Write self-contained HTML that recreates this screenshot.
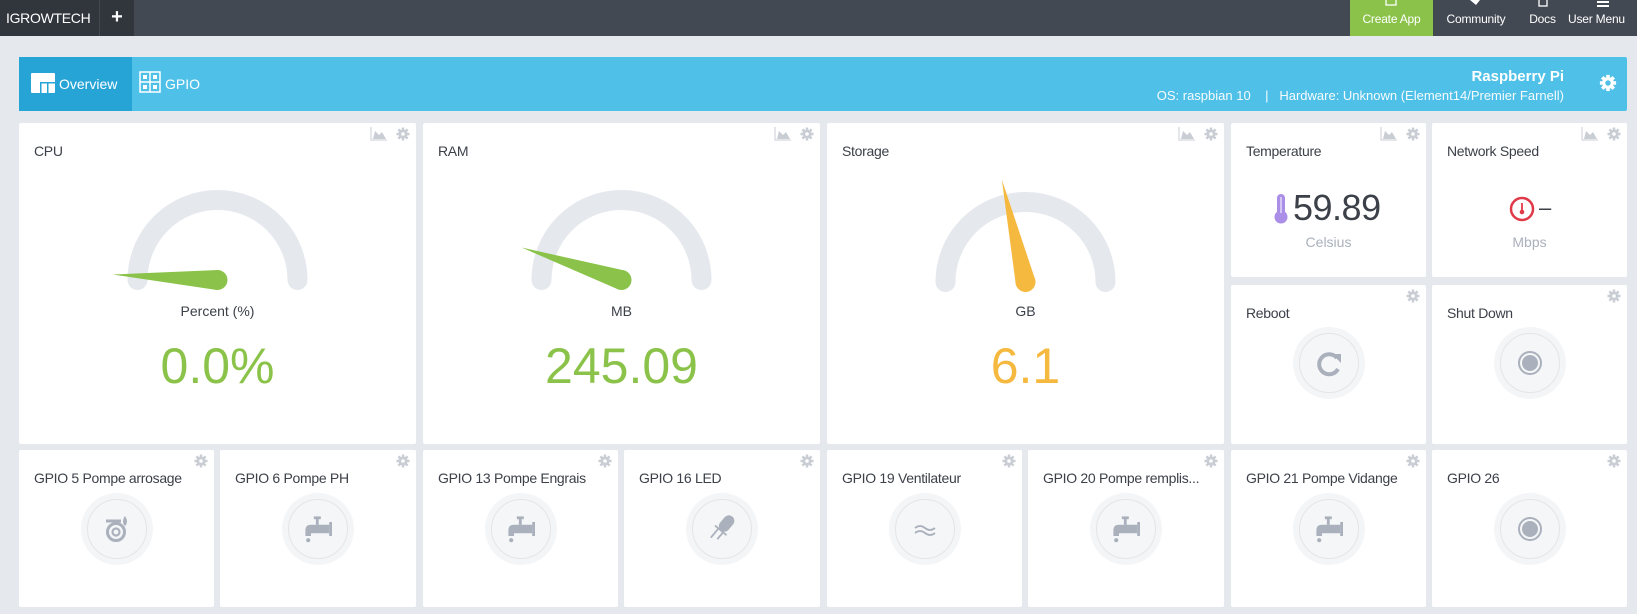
<!DOCTYPE html>
<html><head><meta charset="utf-8"><style>
*{margin:0;padding:0;box-sizing:border-box}
body{width:1637px;height:614px;overflow:hidden;background:#e5e8ed;font-family:"Liberation Sans",sans-serif;position:relative;color:#3c4049}
.top{position:absolute;left:0;top:0;width:1637px;height:36px;background:#434953}
.brand{position:absolute;left:0;top:0;width:99px;height:36px;background:#31353c;color:#fff;font-size:14px;line-height:36px;padding-left:6px;letter-spacing:-0.3px}
.plus{position:absolute;left:100px;top:0;width:34px;height:36px;background:#31353c;color:#fff;font-size:20px;font-weight:bold;text-align:center;line-height:34px}
.nav{position:absolute;top:0;height:36px;color:#fff;font-size:12px;text-align:center;padding-top:12px;letter-spacing:-0.2px}
.bar{position:absolute;left:19px;top:57px;width:1608px;height:54px;background:#4fc0e8;border-radius:2px}
.tab1{position:absolute;left:0;top:0;width:113px;height:54px;background:#27a4d6;color:#fff;font-size:14px;line-height:54px;padding-left:40px}
.tab2{position:absolute;left:146px;top:0;color:#fff;font-size:14px;line-height:54px}
.card{position:absolute;background:#fff;border-radius:2px}
.t{position:absolute;left:15px;top:20px;font-size:14px;color:#3c4049;letter-spacing:-0.3px}
.ico{position:absolute;top:4px;right:6px;width:40px;height:14px}
.big{position:absolute;width:100%;text-align:center}
.circ{position:absolute;width:72px;height:72px;border-radius:50%;background:#f4f5f7;left:50%;margin-left:-36px}
.circ .in{position:absolute;left:6px;top:6px;width:60px;height:60px;border-radius:50%;border:1px solid #e3e5e8;background:#f5f6f8}
.circ svg{position:absolute;left:0;top:0}
</style></head><body>
<div class="top">
 <div class="brand">IGROWTECH</div>
 <div class="plus">+</div>
 <div class="nav" style="left:1350px;width:83px;background:#8bc34a">Create App</div>
 <div class="nav" style="left:1433px;width:86px">Community</div>
 <div class="nav" style="left:1519px;width:47px">Docs</div>
 <div class="nav" style="left:1566px;width:80px;text-align:left;padding-left:2px">User Menu</div>
 <svg style="position:absolute;left:1384px;top:0" width="14" height="8"><rect x="2" y="-3" width="10" height="8" fill="none" stroke="#fff" stroke-width="1.3"/></svg>
 <svg style="position:absolute;left:1468px;top:0" width="14" height="8"><path d="M2 0 L12 0 L8 5 Z" fill="#fff"/></svg>
 <svg style="position:absolute;left:1536px;top:0" width="14" height="8"><rect x="3" y="-3" width="8" height="9" fill="none" stroke="#fff" stroke-width="1.3"/></svg>
 <svg style="position:absolute;left:1596px;top:0" width="14" height="8"><rect x="1" y="1" width="12" height="2" fill="#fff"/><rect x="1" y="5" width="12" height="2" fill="#fff"/></svg>
</div>
<div class="bar">
 <div class="tab1"><svg style="position:absolute;left:12px;top:16px" width="24" height="20"><rect x="0" y="0" width="24" height="20" fill="#fff" rx="1"/><rect x="9" y="9" width="1.5" height="11" fill="#27a4d6"/><rect x="9" y="9" width="15" height="1.5" fill="#27a4d6"/><rect x="16" y="10" width="1.5" height="10" fill="#27a4d6"/></svg>Overview</div>
 <svg style="position:absolute;left:120px;top:14px" width="22" height="22"><g fill="none" stroke="#fff" stroke-width="1.5"><rect x="1" y="1" width="20" height="20"/><line x1="11" y1="1" x2="11" y2="21"/><line x1="1" y1="11" x2="21" y2="11"/></g><g fill="#fff"><rect x="4" y="4" width="4" height="4"/><rect x="14" y="4" width="4" height="4"/><rect x="4" y="14" width="4" height="4"/><rect x="14" y="14" width="4" height="4"/></g></svg>
 <div class="tab2">GPIO</div>
 <div style="position:absolute;right:63px;top:11px;color:#fff;font-weight:bold;font-size:15px">Raspberry Pi</div>
 <div style="position:absolute;right:63px;top:31px;color:#fff;font-size:13px;opacity:.95">OS: raspbian 10 &nbsp;&nbsp; | &nbsp;&nbsp;Hardware: Unknown (Element14/Premier Farnell)</div>
 <svg style="position:absolute;left:1580px;top:17px" width="18" height="18" viewBox="0 0 20 20"><g fill="#fff"><circle cx="10" cy="10" r="6.5"/><g stroke="#fff" stroke-width="4"><line x1="10" y1="1" x2="10" y2="19"/><line x1="1" y1="10" x2="19" y2="10"/><line x1="3.6" y1="3.6" x2="16.4" y2="16.4"/><line x1="16.4" y1="3.6" x2="3.6" y2="16.4"/></g></g><circle cx="10" cy="10" r="3" fill="#4fc0e8"/></svg>
</div>

<!-- Row 1 -->
<div class="card" style="left:19px;top:123px;width:397px;height:321px">
 <div class="t">CPU</div>
 <svg class="ico" viewBox="0 0 40 14"><path d="M1 0V13H17" stroke="#c9cdd4" fill="none"/><path d="M3 12 L5 4 L9 8 L12 5 L16 12Z" fill="#c9cdd4"/><g transform="translate(33,7)"><circle r="4.5" fill="#c9cdd4"/><g stroke="#c9cdd4" stroke-width="2.5"><line y1="-6.5" y2="6.5"/><line x1="-6.5" x2="6.5"/><line x1="-4.6" y1="-4.6" x2="4.6" y2="4.6"/><line x1="4.6" y1="-4.6" x2="-4.6" y2="4.6"/></g><circle r="1.8" fill="#fff"/></g></svg>
 <svg style="position:absolute;left:0;top:0" width="397" height="200"><path d="M118.5 157 A80 80 0 0 1 278.5 157" stroke="#e5e8ed" stroke-width="20" fill="none" stroke-linecap="round"/><g transform="translate(198.5,157) rotate(183)"><path d="M0 -10 L105 0 L0 10Z" fill="#8bc34a"/><circle r="10" fill="#8bc34a"/></g></svg>
 <div class="big" style="top:180px;font-size:14px">Percent (%)</div>
 <div class="big" style="top:214px;font-size:50px;color:#8bc34a">0.0%</div>
</div>
<div class="card" style="left:423px;top:123px;width:397px;height:321px">
 <div class="t">RAM</div>
 <svg class="ico" viewBox="0 0 40 14"><path d="M1 0V13H17" stroke="#c9cdd4" fill="none"/><path d="M3 12 L5 4 L9 8 L12 5 L16 12Z" fill="#c9cdd4"/><g transform="translate(33,7)"><circle r="4.5" fill="#c9cdd4"/><g stroke="#c9cdd4" stroke-width="2.5"><line y1="-6.5" y2="6.5"/><line x1="-6.5" x2="6.5"/><line x1="-4.6" y1="-4.6" x2="4.6" y2="4.6"/><line x1="4.6" y1="-4.6" x2="-4.6" y2="4.6"/></g><circle r="1.8" fill="#fff"/></g></svg>
 <svg style="position:absolute;left:0;top:0" width="397" height="200"><path d="M118.5 157 A80 80 0 0 1 278.5 157" stroke="#e5e8ed" stroke-width="20" fill="none" stroke-linecap="round"/><g transform="translate(198.5,157) rotate(198)"><path d="M0 -10 L105 0 L0 10Z" fill="#8bc34a"/><circle r="10" fill="#8bc34a"/></g></svg>
 <div class="big" style="top:180px;font-size:14px">MB</div>
 <div class="big" style="top:214px;font-size:50px;color:#8bc34a">245.09</div>
</div>
<div class="card" style="left:827px;top:123px;width:397px;height:321px">
 <div class="t">Storage</div>
 <svg class="ico" viewBox="0 0 40 14"><path d="M1 0V13H17" stroke="#c9cdd4" fill="none"/><path d="M3 12 L5 4 L9 8 L12 5 L16 12Z" fill="#c9cdd4"/><g transform="translate(33,7)"><circle r="4.5" fill="#c9cdd4"/><g stroke="#c9cdd4" stroke-width="2.5"><line y1="-6.5" y2="6.5"/><line x1="-6.5" x2="6.5"/><line x1="-4.6" y1="-4.6" x2="4.6" y2="4.6"/><line x1="4.6" y1="-4.6" x2="-4.6" y2="4.6"/></g><circle r="1.8" fill="#fff"/></g></svg>
 <svg style="position:absolute;left:0;top:0" width="397" height="200"><path d="M118.5 159 A80 80 0 0 1 278.5 159" stroke="#e5e8ed" stroke-width="20" fill="none" stroke-linecap="round"/><g transform="translate(198.5,159) rotate(257)"><path d="M0 -10 L105 0 L0 10Z" fill="#f6b940"/><circle r="10" fill="#f6b940"/></g></svg>
 <div class="big" style="top:180px;font-size:14px">GB</div>
 <div class="big" style="top:214px;font-size:50px;color:#f6b940">6.1</div>
</div>
<div class="card" style="left:1231px;top:123px;width:195px;height:154px">
 <div class="t">Temperature</div>
 <svg class="ico" viewBox="0 0 40 14"><path d="M1 0V13H17" stroke="#c9cdd4" fill="none"/><path d="M3 12 L5 4 L9 8 L12 5 L16 12Z" fill="#c9cdd4"/><g transform="translate(33,7)"><circle r="4.5" fill="#c9cdd4"/><g stroke="#c9cdd4" stroke-width="2.5"><line y1="-6.5" y2="6.5"/><line x1="-6.5" x2="6.5"/><line x1="-4.6" y1="-4.6" x2="4.6" y2="4.6"/><line x1="4.6" y1="-4.6" x2="-4.6" y2="4.6"/></g><circle r="1.8" fill="#fff"/></g></svg>
 <svg style="position:absolute;left:42px;top:70px" width="16" height="32"><rect x="4" y="1" width="8" height="22" rx="4" fill="#ab8ee8"/><circle cx="8" cy="24" r="6.5" fill="#ab8ee8"/><rect x="7" y="4" width="2" height="16" fill="#fff" opacity=".5"/></svg>
 <div style="position:absolute;left:62px;top:64px;font-size:36px;color:#3c4049;letter-spacing:-0.5px">59.89</div>
 <div class="big" style="top:111px;font-size:14px;color:#aab1bc">Celsius</div>
</div>
<div class="card" style="left:1432px;top:123px;width:195px;height:154px">
 <div class="t">Network Speed</div>
 <svg class="ico" viewBox="0 0 40 14"><path d="M1 0V13H17" stroke="#c9cdd4" fill="none"/><path d="M3 12 L5 4 L9 8 L12 5 L16 12Z" fill="#c9cdd4"/><g transform="translate(33,7)"><circle r="4.5" fill="#c9cdd4"/><g stroke="#c9cdd4" stroke-width="2.5"><line y1="-6.5" y2="6.5"/><line x1="-6.5" x2="6.5"/><line x1="-4.6" y1="-4.6" x2="4.6" y2="4.6"/><line x1="4.6" y1="-4.6" x2="-4.6" y2="4.6"/></g><circle r="1.8" fill="#fff"/></g></svg>
 <svg style="position:absolute;left:76px;top:72px" width="28" height="28"><circle cx="14" cy="14" r="11" fill="none" stroke="#e03a48" stroke-width="2.5"/><line x1="14" y1="8" x2="14" y2="16" stroke="#e03a48" stroke-width="1.8"/><circle cx="14" cy="17" r="2.3" fill="#e03a48"/></svg>
 <div style="position:absolute;left:107px;top:72px;font-size:22px;color:#3c4049">–</div>
 <div class="big" style="top:111px;font-size:14px;color:#aab1bc">Mbps</div>
</div>
<div class="card" style="left:1231px;top:285px;width:195px;height:159px">
 <div class="t">Reboot</div>
 <svg class="ico" viewBox="0 0 40 14"><g transform="translate(33,7)"><circle r="4.5" fill="#c9cdd4"/><g stroke="#c9cdd4" stroke-width="2.5"><line y1="-6.5" y2="6.5"/><line x1="-6.5" x2="6.5"/><line x1="-4.6" y1="-4.6" x2="4.6" y2="4.6"/><line x1="4.6" y1="-4.6" x2="-4.6" y2="4.6"/></g><circle r="1.8" fill="#fff"/></g></svg>
 <div class="circ" style="top:42px"><div class="in"></div><svg width="72" height="72"><path d="M44 31 A10 10 0 1 0 45 42" stroke="#aab1bc" stroke-width="4" fill="none"/><path d="M39 27 L48 27 L48 36Z" fill="#aab1bc"/></svg></div>
</div>
<div class="card" style="left:1432px;top:285px;width:195px;height:159px">
 <div class="t">Shut Down</div>
 <svg class="ico" viewBox="0 0 40 14"><g transform="translate(33,7)"><circle r="4.5" fill="#c9cdd4"/><g stroke="#c9cdd4" stroke-width="2.5"><line y1="-6.5" y2="6.5"/><line x1="-6.5" x2="6.5"/><line x1="-4.6" y1="-4.6" x2="4.6" y2="4.6"/><line x1="4.6" y1="-4.6" x2="-4.6" y2="4.6"/></g><circle r="1.8" fill="#fff"/></g></svg>
 <div class="circ" style="top:42px"><div class="in"></div><svg width="72" height="72"><circle cx="36" cy="36" r="11" fill="none" stroke="#aab1bc" stroke-width="2"/><circle cx="36" cy="36" r="8" fill="#aab1bc"/></svg></div>
</div>

<!-- Row 2 -->
<div class="card" style="left:19px;top:450px;width:195px;height:157px"><div class="t">GPIO 5 Pompe arrosage</div><svg class="ico" viewBox="0 0 40 14"><g transform="translate(33,7)"><circle r="4.5" fill="#c9cdd4"/><g stroke="#c9cdd4" stroke-width="2.5"><line y1="-6.5" y2="6.5"/><line x1="-6.5" x2="6.5"/><line x1="-4.6" y1="-4.6" x2="4.6" y2="4.6"/><line x1="4.6" y1="-4.6" x2="-4.6" y2="4.6"/></g><circle r="1.8" fill="#fff"/></g></svg>
 <div class="circ" style="top:43px"><div class="in"></div><svg width="72" height="72"><circle cx="35" cy="39" r="8.5" fill="none" stroke="#aab1bc" stroke-width="3"/><circle cx="35" cy="39" r="3.5" fill="none" stroke="#aab1bc" stroke-width="2.2"/><line x1="25" y1="28" x2="40" y2="28" stroke="#aab1bc" stroke-width="3"/><path d="M44 23 Q48 29 44 33 Q40 29 44 23Z" fill="#aab1bc"/></svg></div></div>
<div class="card" style="left:220px;top:450px;width:196px;height:157px"><div class="t">GPIO 6 Pompe PH</div><svg class="ico" viewBox="0 0 40 14"><g transform="translate(33,7)"><circle r="4.5" fill="#c9cdd4"/><g stroke="#c9cdd4" stroke-width="2.5"><line y1="-6.5" y2="6.5"/><line x1="-6.5" x2="6.5"/><line x1="-4.6" y1="-4.6" x2="4.6" y2="4.6"/><line x1="4.6" y1="-4.6" x2="-4.6" y2="4.6"/></g><circle r="1.8" fill="#fff"/></g></svg>
 <div class="circ" style="top:43px"><div class="in"></div><svg width="72" height="72"><g transform="translate(36,36) scale(1.4) translate(-37,-33)"><rect x="34" y="24" width="5" height="2" fill="#aab1bc"/><rect x="35.5" y="25" width="2" height="5" fill="#aab1bc"/><path d="M28 38 L28 34 Q28 30 32 30 L45 30 L45 36 L32 36 L32 38Z" fill="#aab1bc"/><rect x="45" y="28" width="2" height="10" fill="#aab1bc"/><circle cx="30" cy="41" r="1.5" fill="#aab1bc"/></g></svg></div></div>
<div class="card" style="left:423px;top:450px;width:195px;height:157px"><div class="t">GPIO 13 Pompe Engrais</div><svg class="ico" viewBox="0 0 40 14"><g transform="translate(33,7)"><circle r="4.5" fill="#c9cdd4"/><g stroke="#c9cdd4" stroke-width="2.5"><line y1="-6.5" y2="6.5"/><line x1="-6.5" x2="6.5"/><line x1="-4.6" y1="-4.6" x2="4.6" y2="4.6"/><line x1="4.6" y1="-4.6" x2="-4.6" y2="4.6"/></g><circle r="1.8" fill="#fff"/></g></svg>
 <div class="circ" style="top:43px"><div class="in"></div><svg width="72" height="72"><g transform="translate(36,36) scale(1.4) translate(-37,-33)"><rect x="34" y="24" width="5" height="2" fill="#aab1bc"/><rect x="35.5" y="25" width="2" height="5" fill="#aab1bc"/><path d="M28 38 L28 34 Q28 30 32 30 L45 30 L45 36 L32 36 L32 38Z" fill="#aab1bc"/><rect x="45" y="28" width="2" height="10" fill="#aab1bc"/><circle cx="30" cy="41" r="1.5" fill="#aab1bc"/></g></svg></div></div>
<div class="card" style="left:624px;top:450px;width:196px;height:157px"><div class="t">GPIO 16 LED</div><svg class="ico" viewBox="0 0 40 14"><g transform="translate(33,7)"><circle r="4.5" fill="#c9cdd4"/><g stroke="#c9cdd4" stroke-width="2.5"><line y1="-6.5" y2="6.5"/><line x1="-6.5" x2="6.5"/><line x1="-4.6" y1="-4.6" x2="4.6" y2="4.6"/><line x1="4.6" y1="-4.6" x2="-4.6" y2="4.6"/></g><circle r="1.8" fill="#fff"/></g></svg>
 <div class="circ" style="top:43px"><div class="in"></div><svg width="72" height="72"><g transform="rotate(40 37 34)"><rect x="32" y="20" width="11" height="18" rx="5.5" fill="#aab1bc"/><line x1="34.5" y1="38" x2="34.5" y2="50" stroke="#aab1bc" stroke-width="1.8"/><line x1="40.5" y1="38" x2="40.5" y2="47" stroke="#aab1bc" stroke-width="1.8"/><line x1="30" y1="38" x2="45" y2="38" stroke="#aab1bc" stroke-width="1.8"/></g></svg></div></div>
<div class="card" style="left:827px;top:450px;width:195px;height:157px"><div class="t">GPIO 19 Ventilateur</div><svg class="ico" viewBox="0 0 40 14"><g transform="translate(33,7)"><circle r="4.5" fill="#c9cdd4"/><g stroke="#c9cdd4" stroke-width="2.5"><line y1="-6.5" y2="6.5"/><line x1="-6.5" x2="6.5"/><line x1="-4.6" y1="-4.6" x2="4.6" y2="4.6"/><line x1="4.6" y1="-4.6" x2="-4.6" y2="4.6"/></g><circle r="1.8" fill="#fff"/></g></svg>
 <div class="circ" style="top:43px"><div class="in"></div><svg width="72" height="72"><g fill="none" stroke="#aab1bc" stroke-width="1.8"><path d="M26 35 Q31 31 36 35 T46 35"/><path d="M26 40 Q31 36 36 40 T46 40"/></g></svg></div></div>
<div class="card" style="left:1028px;top:450px;width:196px;height:157px"><div class="t">GPIO 20 Pompe remplis...</div><svg class="ico" viewBox="0 0 40 14"><g transform="translate(33,7)"><circle r="4.5" fill="#c9cdd4"/><g stroke="#c9cdd4" stroke-width="2.5"><line y1="-6.5" y2="6.5"/><line x1="-6.5" x2="6.5"/><line x1="-4.6" y1="-4.6" x2="4.6" y2="4.6"/><line x1="4.6" y1="-4.6" x2="-4.6" y2="4.6"/></g><circle r="1.8" fill="#fff"/></g></svg>
 <div class="circ" style="top:43px"><div class="in"></div><svg width="72" height="72"><g transform="translate(36,36) scale(1.4) translate(-37,-33)"><rect x="34" y="24" width="5" height="2" fill="#aab1bc"/><rect x="35.5" y="25" width="2" height="5" fill="#aab1bc"/><path d="M28 38 L28 34 Q28 30 32 30 L45 30 L45 36 L32 36 L32 38Z" fill="#aab1bc"/><rect x="45" y="28" width="2" height="10" fill="#aab1bc"/><circle cx="30" cy="41" r="1.5" fill="#aab1bc"/></g></svg></div></div>
<div class="card" style="left:1231px;top:450px;width:195px;height:157px"><div class="t">GPIO 21 Pompe Vidange</div><svg class="ico" viewBox="0 0 40 14"><g transform="translate(33,7)"><circle r="4.5" fill="#c9cdd4"/><g stroke="#c9cdd4" stroke-width="2.5"><line y1="-6.5" y2="6.5"/><line x1="-6.5" x2="6.5"/><line x1="-4.6" y1="-4.6" x2="4.6" y2="4.6"/><line x1="4.6" y1="-4.6" x2="-4.6" y2="4.6"/></g><circle r="1.8" fill="#fff"/></g></svg>
 <div class="circ" style="top:43px"><div class="in"></div><svg width="72" height="72"><g transform="translate(36,36) scale(1.4) translate(-37,-33)"><rect x="34" y="24" width="5" height="2" fill="#aab1bc"/><rect x="35.5" y="25" width="2" height="5" fill="#aab1bc"/><path d="M28 38 L28 34 Q28 30 32 30 L45 30 L45 36 L32 36 L32 38Z" fill="#aab1bc"/><rect x="45" y="28" width="2" height="10" fill="#aab1bc"/><circle cx="30" cy="41" r="1.5" fill="#aab1bc"/></g></svg></div></div>
<div class="card" style="left:1432px;top:450px;width:195px;height:157px"><div class="t">GPIO 26</div><svg class="ico" viewBox="0 0 40 14"><g transform="translate(33,7)"><circle r="4.5" fill="#c9cdd4"/><g stroke="#c9cdd4" stroke-width="2.5"><line y1="-6.5" y2="6.5"/><line x1="-6.5" x2="6.5"/><line x1="-4.6" y1="-4.6" x2="4.6" y2="4.6"/><line x1="4.6" y1="-4.6" x2="-4.6" y2="4.6"/></g><circle r="1.8" fill="#fff"/></g></svg>
 <div class="circ" style="top:43px"><div class="in"></div><svg width="72" height="72"><circle cx="36" cy="36" r="11" fill="none" stroke="#aab1bc" stroke-width="2"/><circle cx="36" cy="36" r="8" fill="#aab1bc"/></svg></div></div>
</body></html>
